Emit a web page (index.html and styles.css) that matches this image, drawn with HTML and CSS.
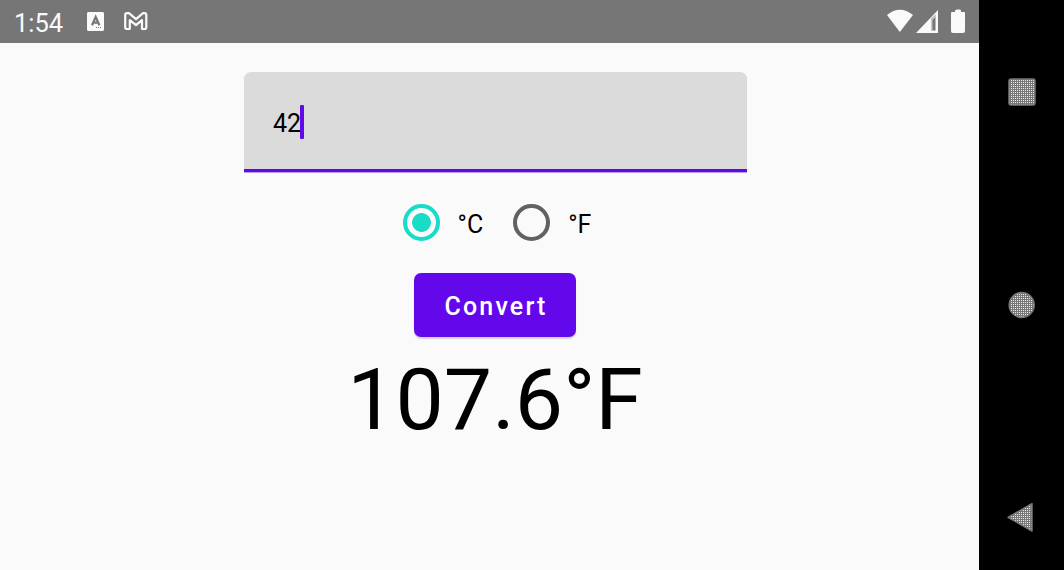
FILE: index.html
```html
<!DOCTYPE html>
<html lang="en">
<head>
<meta charset="utf-8">
<title>Temperature converter</title>
<link rel="stylesheet" href="styles.css">
</head>
<body>
<div class="device">
  <main class="screen">
    <header class="status">
      <span class="clock">1:54</span>
      <svg class="notice-app" width="18" height="20" viewBox="0 0 18 20"><path fill="#fafafa" d="M1 0H16L17 1V18L16 19H1L0 18V1Z"/><path fill="none" stroke="#777" stroke-width="2.200" d="M5 13.2 8.7 5 12.4 13.2M6.3 10.6H11"/><path stroke="#777" stroke-dasharray="1 1" d="M9 15.5H15"/></svg>
      <svg class="notice-mail" width="24" height="19" viewBox="0 0 24 19"><path fill="none" stroke="#fafafa" stroke-width="2.200" stroke-linejoin="round" d="M1.2 3Q1.2 1.2 3 1.2H5L12 7.2 19 1.2H20.5Q22.3 1.2 22.3 3V15.3Q22.3 17 20.500 17H18V8.2L12 13.2 5.8 8.2V17H3Q1.2 17 1.2 15.3Z"/></svg>
      <svg class="signals" width="79" height="24" viewBox="0 0 79 24" fill="#fafafa"><path d="M0 6Q12.7-4.6 26 6L12.8 23Z"/><path fill-rule="evenodd" d="M29 24 51 1V24ZM44 9.500V21.500H48.500V5.500Z"/><path d="M44 9.500 48.500 5.500V8L45.500 11V21.500H44Z" opacity=".6"/><path d="M65 3H68V1.500L70 0.500H73L74 1.500V3H77Q78 3 78 4V22Q78 24 76 24H66Q64 24 64 22V4Q64 3 65 3Z"/></svg>
    </header>
    <section class="converter">
      <div class="field"><span>42</span><i class="caret"></i></div>
      <div class="choices">
        <span class="radio on"></span><span class="choice-label">°C</span>
        <span class="radio second"></span><span class="choice-label">°F</span>
      </div>
      <button class="convert">Convert</button>
      <output class="result">107.6°F</output>
    </section>
  </main>
  <nav class="navigation">
    <svg width="85" height="570" viewBox="0 0 85 570">
      <defs><pattern id="dots" width="2" height="2" patternUnits="userSpaceOnUse"><path fill="#777" d="M0 0H2V2H0Z"/><path fill="#ececec" d="M0 0H1V1H0Z"/></pattern></defs>
      <g fill="url(#dots)" stroke="#777" stroke-width="1.500"><rect x="30" y="79" width="26" height="26" rx="2"/><circle cx="42.700" cy="305" r="12.500"/><path stroke-linejoin="round" d="M29 517.300 53 503.700V531Z"/></g>
    </svg>
  </nav>
</div>
</body>
</html>
```
FILE: styles.css
```css
body { margin: 0; font-family: Roboto, sans-serif; color: #000; }
.device { display: flex; width: 1064px; height: 570px; overflow: hidden; background: #000; }
.screen { width: 979px; background: #fafafa; }
.status { display: flex; height: 43px; box-sizing: border-box; padding-left: 14px; background: #767676; color: #fafafa; }
.clock { width: 73px; font-size: 25.5px; line-height: 30px; padding-top: 8px; box-sizing: border-box; }
.notice-app { margin-top: 12px; }
.notice-mail { margin: 12px 0 0 19px; }
.signals { margin: 9px 13px 0 auto; }
.converter { display: flex; flex-direction: column; align-items: center; padding: 29px 0 0 12px; }
.field { display: flex; align-items: center; width: 503px; height: 100px; box-sizing: border-box; padding: 5px 0 0 29px; border-bottom: 3px solid #6408ec; border-radius: 7px 7px 0 0; background: #dbdbdb; font-size: 25px; box-shadow: 0 1px 0 #b89ef2; }
.caret { width: 4px; height: 34px; margin: 0 0 2px -1px; border-radius: 1px; background: #6408ec; }
.choices { display: flex; align-items: center; height: 37px; margin: 32px 0 0 3px; font-size: 25px; }
.radio { width: 37px; height: 37px; box-sizing: border-box; border: 4px solid #616161; border-radius: 50%; }
.on { border-color: #18dcc8; background: radial-gradient(circle, #18dcc8 9px, transparent 9.7px); }
.second { margin-left: 30px; }
.choice-label { margin: 4px 0 0 18px; }
.convert { width: 162px; height: 64px; margin: 32px 2px 0 0; padding: 3px 0 0 3px; border: 0; border-radius: 7px; background: #6408ec; color: #fff; font: 500 25px Roboto, sans-serif; letter-spacing: 2.2px; box-shadow: 0 2px 1px #d5d5d5; }
.result { margin: 12px 1px 0 0; font-size: 86px; line-height: 101px; }
.navigation { width: 85px; }
```
